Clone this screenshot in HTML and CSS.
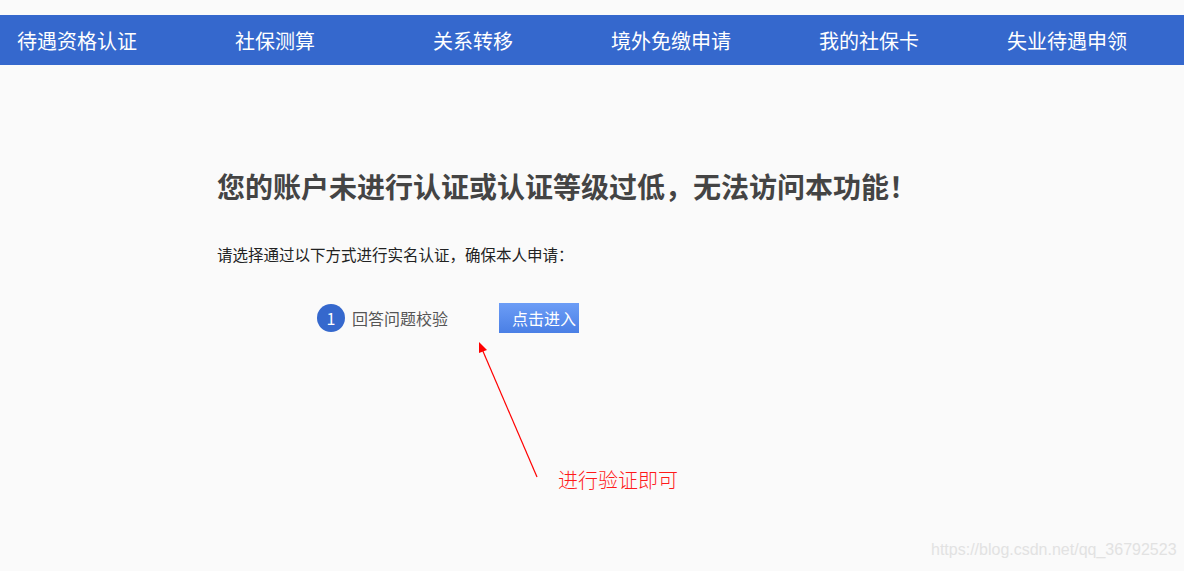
FILE: index.html
```html
<!DOCTYPE html>
<html lang="zh-CN">
  <head>
    <meta charset="UTF-8" />
    <meta name="viewport" content="width=device-width, initial-scale=1.0" />
    <title>实名认证</title>
    <link rel="stylesheet" href="styles.css">
  </head>
  <body>
    <nav class="topnav">
      <a class="topnav-item" href="#">待遇资格认证</a>
      <a class="topnav-item" href="#">社保测算</a>
      <a class="topnav-item" href="#">关系转移</a>
      <a class="topnav-item" href="#">境外免缴申请</a>
      <a class="topnav-item" href="#">我的社保卡</a>
      <a class="topnav-item" href="#">失业待遇申领</a>
    </nav>

    <main class="notice">
      <h1 class="notice-title">您的账户未进行认证或认证等级过低，无法访问本功能！</h1>
      <p class="notice-desc">请选择通过以下方式进行实名认证，确保本人申请：</p>

      <div class="auth-step">
        <span class="auth-step-num">1</span>
        <span class="auth-step-name">回答问题校验</span>
        <button class="auth-step-btn">点击进入</button>
      </div>
    </main>

    <!-- annotation drawn over the screenshot -->
    <svg class="annot-arrow" width="1184" height="571" viewBox="0 0 1184 571">
      <line x1="537" y1="477" x2="482" y2="349" stroke="#ff0000" stroke-width="1.2" />
      <polygon points="479,342 487,350 479,353" fill="#ff0000" />
    </svg>
    <span class="annot-text">进行验证即可</span>

    <span class="watermark">https://blog.csdn.net/qq_36792523</span>
  </body>
</html>
```

FILE: styles.css
```css
html,
body {
  margin: 0;
  padding: 0;
}

body {
  position: relative;
  height: 571px;
  background: #fafafa;
  font-family: "Noto Sans CJK SC", "Noto Sans", sans-serif;
  overflow: hidden;
}

.topnav {
  display: grid;
  grid-template-columns: repeat(6, 198px);
  height: 50px;
  margin-top: 15px;
  margin-left: -22px;
  margin-right: -22px;
  background: #3568cd;
}

.topnav-item {
  display: flex;
  align-items: center;
  justify-content: center;
  color: #fff;
  font-size: 20px;
  text-decoration: none;
}

.notice {
  padding: 100px 0 0 217px;
}

.notice-title {
  margin: 0;
  font-size: 28px;
  line-height: 42px;
  font-weight: bold;
  color: #444;
}

.notice-desc {
  margin: 35px 0 0;
  font-size: 15.5px;
  line-height: 24px;
  color: #222;
}

.auth-step {
  display: flex;
  align-items: center;
  margin: 37px 0 0 100px;
  height: 30px;
}

.auth-step-num {
  display: flex;
  align-items: center;
  justify-content: center;
  width: 28px;
  height: 28px;
  border-radius: 50%;
  background: #3568cd;
  color: #fff;
  font-size: 16px;
}

.auth-step-name {
  margin-left: 7px;
  font-size: 16px;
  color: #555;
}

.auth-step-btn {
  margin-left: 51px;
  width: 80px;
  height: 30px;
  padding: 0 0 0 13px;
  border: none;
  text-align: left;
  background: linear-gradient(#6c9df6, #4a7fe5);
  color: #fff;
  font-family: inherit;
  font-size: 16px;
  cursor: pointer;
}

.annot-arrow {
  position: absolute;
  left: 0;
  top: 0;
  pointer-events: none;
}

.annot-text {
  position: absolute;
  left: 558px;
  top: 466px;
  font-size: 20px;
  line-height: 28px;
  color: #ff1a1a;
  font-weight: 300;
}

.watermark {
  position: absolute;
  left: 931px;
  top: 541px;
  font-family: "Liberation Sans", Arial, sans-serif;
  font-size: 16px;
  color: #e2e2e2;
}
```
